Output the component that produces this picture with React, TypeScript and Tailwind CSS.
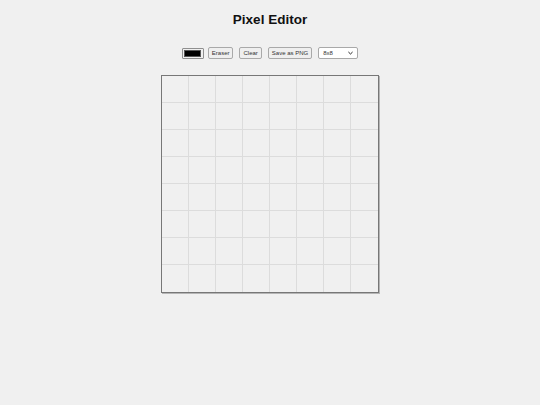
import { useState } from 'react';

const SIZE = 8;

export default function App() {
  const [color, setColor] = useState('#000000');
  const [cells, setCells] = useState<string[]>(() => Array(SIZE * SIZE).fill(''));

  const paint = (i: number) => {
    setCells((prev) => prev.map((c, idx) => (idx === i ? color : c)));
  };

  const btn =
    'h-[12px] rounded-[2px] border border-[#a9a9a9] bg-[#efefef] px-[3px] text-[6px] leading-none text-[#333]';

  return (
    <div className="min-h-[405px] w-full bg-[#f0f0f0] font-['Liberation_Sans',Arial,sans-serif]">
      <h1 className="pt-[11px] text-center text-[13.5px] font-bold leading-[17px] text-[#111]">Pixel Editor</h1>

      <div className="mt-[19px] flex items-center justify-center">
        <div className="flex h-[11px] w-[22px] items-center justify-center rounded-[1px] border border-[#8f8f8f] bg-[#efefef]">
          <div className="h-[7px] w-[17px] border border-[#555] bg-black" style={{ background: color }} />
        </div>
        <button className={`${btn} ml-[4px]`} onClick={() => setColor('')}>Eraser</button>
        <button className={`${btn} ml-[6px]`} onClick={() => setCells(Array(SIZE * SIZE).fill(''))}>Clear</button>
        <button className={`${btn} ml-[6px]`}>Save as PNG</button>
        <div className="ml-[6px] flex h-[12px] w-[40px] items-center justify-between rounded-[2px] border border-[#a9a9a9] bg-white px-[4px] text-[6px] leading-none text-[#333]">
          <span>8x8</span>
          <svg width="5" height="4" viewBox="0 0 6 4">
            <path d="M0.5 0.8 L3 3.2 L5.5 0.8" fill="none" stroke="#222" strokeWidth="1.2" />
          </svg>
        </div>
      </div>

      <div className="mt-[16px] flex justify-center">
        <div className="grid grid-cols-[repeat(8,27px)] border border-[#777] shadow-[1px_1px_0_#b5b5b5]">
          {cells.map((c, i) => (
            <div
              key={i}
              onClick={() => paint(i)}
              className={`h-[27px] w-[27px] border-[#dcdcdc] ${i % SIZE !== SIZE - 1 ? 'border-r' : ''} ${i < SIZE * (SIZE - 1) ? 'border-b' : ''}`}
              style={{ background: c || '#f0f0f0' }}
            />
          ))}
        </div>
      </div>
    </div>
  );
}
